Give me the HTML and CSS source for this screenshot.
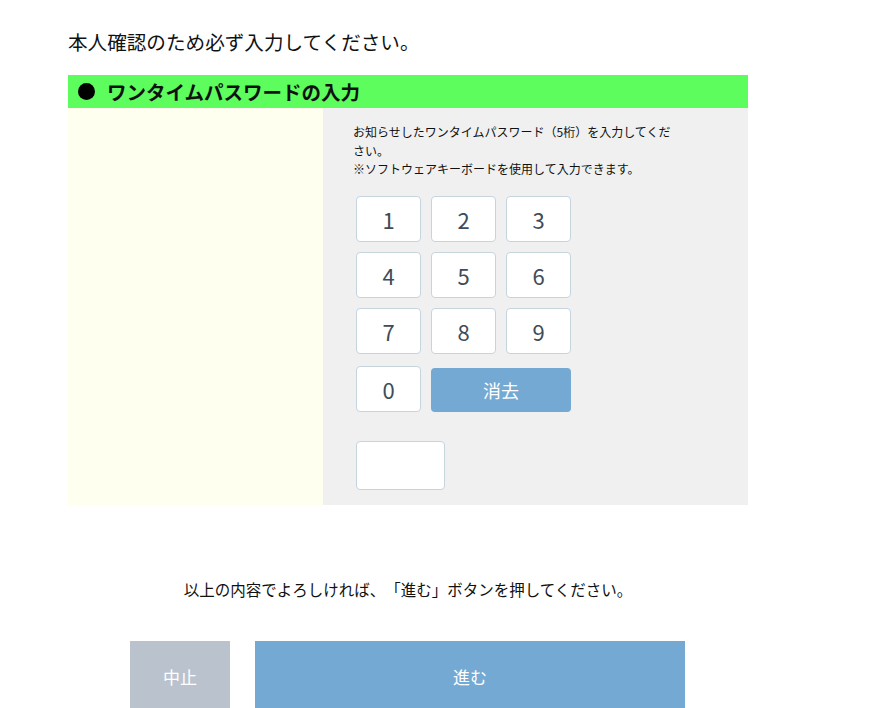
FILE: index.html
```html
<!DOCTYPE html>
<html lang="ja">
<head>
<meta charset="utf-8">
<link rel="stylesheet" href="styles.css">
</head>
<body>
<div class="page">
  <h1 class="title">本人確認のため必ず入力してください。</h1>
  <section class="otp">
    <h2 class="otp-head"><span class="dot"></span>ワンタイムパスワードの入力</h2>
    <div class="otp-body">
      <div class="side"></div>
      <div class="main">
        <p class="note">お知らせしたワンタイムパスワード（5桁）を入力してください。<br>※ソフトウェアキーボードを使用して入力できます。</p>
        <div class="keypad">
          <div class="row"><button class="key">1</button><button class="key">2</button><button class="key">3</button></div>
          <div class="row"><button class="key">4</button><button class="key">5</button><button class="key">6</button></div>
          <div class="row"><button class="key">7</button><button class="key">8</button><button class="key">9</button></div>
          <div class="row last"><button class="key">0</button><button class="clear">消去</button></div>
        </div>
        <div class="code"></div>
      </div>
    </div>
  </section>
  <p class="confirm">以上の内容でよろしければ、「進む」ボタンを押してください。</p>
  <div class="actions">
    <button class="btn cancel">中止</button>
    <button class="btn next">進む</button>
  </div>
</div>
</body>
</html>
```

FILE: styles.css
```css
html, body {
  margin: 0;
  padding: 0;
  background: #ffffff;
}
body {
  font-family: "Noto Sans CJK JP", "Noto Sans", sans-serif;
  color: #111111;
  text-spacing-trim: space-all;
}
.page {
  width: 680px;
  padding-left: 68px;
}
.title {
  margin: 0;
  padding-top: 28px;
  font-size: 19.6px;
  line-height: 28px;
  font-weight: normal;
}
.otp {
  margin-top: 19px;
}
.otp-head {
  margin: 0;
  height: 33px;
  background: #5dfd5d;
  display: flex;
  align-items: center;
  padding-left: 10px;
  font-size: 19.5px;
  font-weight: bold;
  color: #111111;
}
.dot {
  width: 17px;
  height: 17px;
  border-radius: 50%;
  background: #000000;
  margin-right: 12px;
}
.otp-body {
  display: grid;
  grid-template-columns: 255px 425px;
  height: 397px;
}
.side {
  background: #fffff0;
}
.main {
  background: #f0f0f0;
  padding: 15px 0 0 30px;
}
.note {
  margin: 0;
  width: 325px;
  font-size: 12px;
  line-height: 18.6px;
  color: #111111;
}
.keypad {
  margin: 17px 0 0 3px;
  display: flex;
  flex-direction: column;
  gap: 10px;
}
.row {
  display: flex;
  gap: 10px;
}
.row.last {
  margin-top: 2px;
  align-items: flex-end;
}
.key {
  width: 65px;
  height: 46px;
  background: #ffffff;
  border: 1px solid #c6d4dd;
  border-radius: 4px;
  font-family: "Noto Sans CJK JP", "Noto Sans", sans-serif;
  font-size: 22px;
  color: #3e4c59;
  padding: 0;
}
.clear {
  width: 140px;
  height: 44px;
  background: #74a9d3;
  border: none;
  border-radius: 4px;
  color: #ffffff;
  font-family: "Noto Sans CJK JP", "Noto Sans", sans-serif;
  font-size: 18px;
  padding: 0;
}
.code {
  margin: 29px 0 0 3px;
  width: 87px;
  height: 47px;
  background: #ffffff;
  border: 1px solid #c6d4dd;
  border-radius: 4px;
}
.confirm {
  margin: 72px 0 0;
  text-align: center;
  font-size: 15.5px;
  line-height: 24px;
  color: #111111;
}
.actions {
  margin: 40px 0 0 62px;
  display: flex;
  gap: 25px;
}
.btn {
  height: 70px;
  border: none;
  color: #ffffff;
  font-family: "Noto Sans CJK JP", "Noto Sans", sans-serif;
  font-size: 17px;
  padding: 0;
}
.cancel {
  width: 100px;
  background: #bac3cd;
}
.next {
  width: 430px;
  background: #74a9d3;
}
```
